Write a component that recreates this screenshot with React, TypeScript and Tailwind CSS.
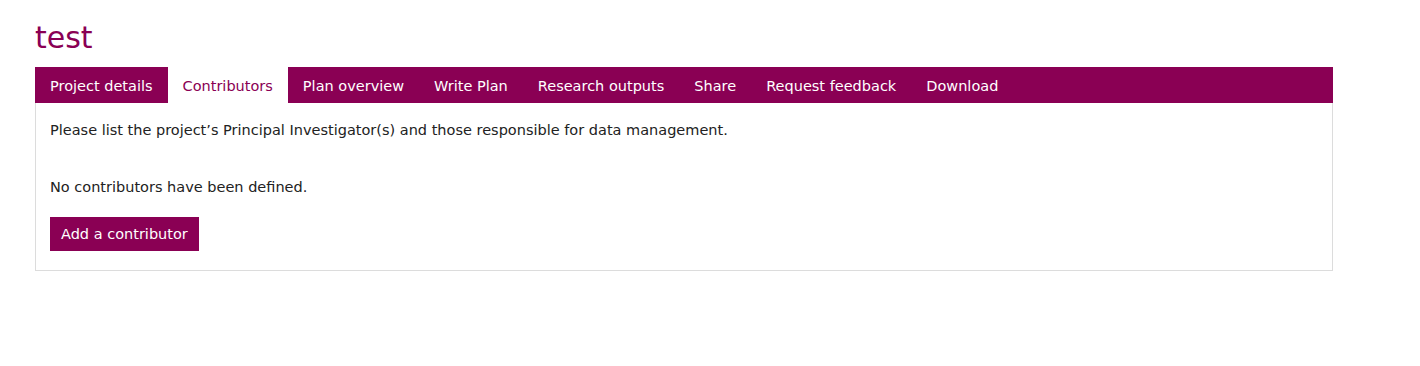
import React from "react";

const tabs = [
  "Project details",
  "Contributors",
  "Plan overview",
  "Write Plan",
  "Research outputs",
  "Share",
  "Request feedback",
  "Download",
];

export default function App() {
  const active = "Contributors";

  return (
    <div className="min-h-[366px] bg-white font-['Tahoma','DejaVu_Sans',sans-serif] text-[#222]">
      <div className="ml-[35px] pt-[18px] w-[1298px]">
        <h1 className="text-[30px] leading-[40px] text-[#8a0054] mb-[9px]">test</h1>

        <ul className="flex bg-[#8a0054] h-[36px]">
          {tabs.map((t) => (
            <li
              key={t}
              className={
                t === active
                  ? "px-[15px] pt-[3px] flex items-center bg-white text-[#8a0054] text-[14.5px]"
                  : "px-[15px] pt-[3px] flex items-center text-white text-[14.5px]"
              }
            >
              {t}
            </li>
          ))}
        </ul>

        <div className="border border-t-0 border-[#dcdcdc] px-[14px] pt-[17px] pb-[19px] text-[14.5px]">
          <p className="leading-[20px]">
            Please list the project’s Principal Investigator(s) and those responsible for data management.
          </p>
          <p className="leading-[20px] mt-[37px]">No contributors have been defined.</p>
          <button className="mt-[20px] h-[34px] px-[11px] pt-[2px] bg-[#8a0054] text-white text-[14.5px]">
            Add a contributor
          </button>
        </div>
      </div>
    </div>
  );
}
